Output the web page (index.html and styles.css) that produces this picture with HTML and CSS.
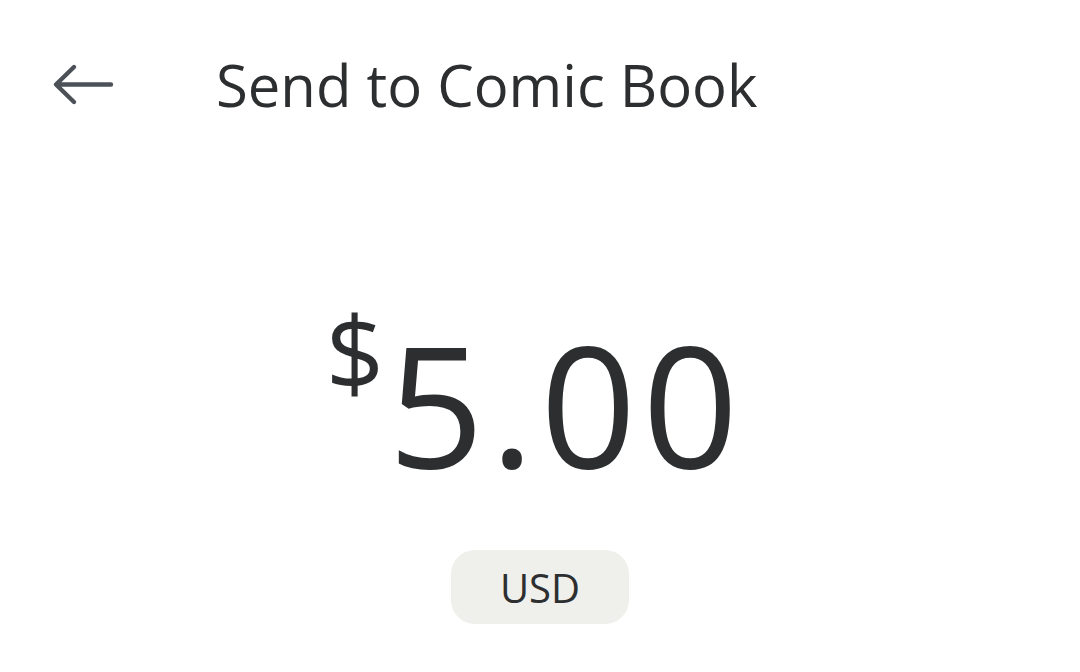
FILE: index.html
```html
<!DOCTYPE html>
<html>
<head>
<meta charset="utf-8">
<link rel="stylesheet" href="styles.css">
</head>
<body>
<div class="page">
  <header class="topbar">
    <button class="back" aria-label="Back">
      <svg width="64" height="44" viewBox="0 0 64 44">
        <path d="M60 21.5 H7 M23 4 L5 21.5 L23 39" fill="none" stroke="#4b5157" stroke-width="4.4" stroke-linecap="round" stroke-linejoin="round"/>
      </svg>
    </button>
    <h1 class="title">Send to Comic Book</h1>
  </header>
  <main class="amount-area">
    <div class="amount">
      <span class="currency">$</span>
      <span class="value">5.00</span>
    </div>
    <div class="pill">USD</div>
  </main>
</div>
</body>
</html>
```

FILE: styles.css
```css
html, body {
  margin: 0;
  padding: 0;
  background: #ffffff;
}
body {
  font-family: "Open Sans", "Noto Sans", sans-serif;
  color: #2c2e2f;
}
.page {
  width: 1080px;
  height: 672px;
  display: flex;
  flex-direction: column;
}
.topbar {
  display: flex;
  align-items: center;
  padding: 63px 0 0 51px;
  height: 44px;
}
.back {
  border: 0;
  background: none;
  padding: 0;
  width: 64px;
  height: 44px;
  display: flex;
}
.title {
  margin: 0 0 0 101px;
  font-size: 58px;
  font-weight: 400;
  letter-spacing: 0;
  line-height: 44px;
}
.amount-area {
  display: flex;
  flex-direction: column;
  align-items: center;
  padding-top: 212px;
}
.amount {
  display: flex;
  align-items: flex-start;
  height: 170px;
  margin-left: -10px;
}
.currency {
  font-size: 102px;
  line-height: 1;
  margin-top: -18px;
  margin-right: 4px;
}
.value {
  font-size: 168px;
  line-height: 1;
  letter-spacing: 6px;
}
.pill {
  margin-top: 61px;
  width: 178px;
  height: 74px;
  border-radius: 24px;
  background: #efefeb;
  display: flex;
  align-items: center;
  justify-content: center;
  font-size: 40px;
}
```
